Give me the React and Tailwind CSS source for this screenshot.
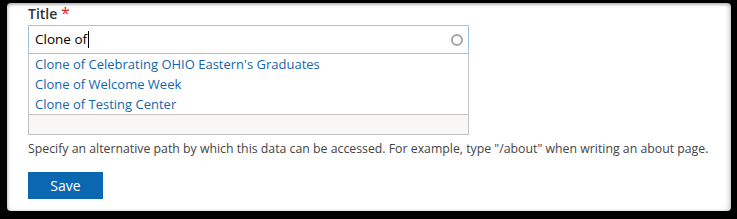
import React from "react";

export default function App() {
  const items = [
    "Clone of Celebrating OHIO Eastern's Graduates",
    "Clone of Welcome Week",
    "Clone of Testing Center",
  ];
  return (
    <div className="w-[737px] h-[219px] bg-black pt-[5px] pl-[7px] pr-[6px] pb-[6px] font-['Open_Sans',sans-serif]">
      <div className="h-full w-full bg-white rounded-[4px] shadow-[inset_0_2px_3px_rgba(0,0,0,0.22),inset_-3px_0_4px_rgba(0,0,0,0.12),inset_2px_0_3px_rgba(0,0,0,0.1)] pl-[21px] pt-0">
        <div className="w-[441px]">
          <div className="mt-[-2px] h-[20px] leading-[20px] text-[14px] font-semibold text-[#333]">
            Title <span className="text-[#e41c1c] font-normal text-[16px]">*</span>
          </div>
          <div className="relative mt-[2px]">
            <div className="h-[29px] border border-[#9fc5e6] flex items-center pl-[6px] pr-[5px] text-[13.5px] text-black">
              <span>Clone of</span>
              <span className="w-px h-[17px] bg-black ml-[1px]" />
              <span className="ml-auto w-[12px] h-[12px] rounded-full border-2 border-[#a6a6a6]" />
            </div>
            <div className="absolute left-0 top-full w-full h-[61px] bg-white border-x border-b border-[#c4c4c4] z-10">
              {items.map((t) => (
                <div key={t} className="h-[20px] leading-[20px] pl-[6px] text-[13px] text-[#1466ad]">
                  {t}
                </div>
              ))}
            </div>
          </div>
          <div className="h-[52px]" />
          <div className="h-[29px] border border-[#c2c2c2] bg-[#f8f7f5]" />
        </div>
        <p className="mt-[5px] h-[18px] leading-[18px] text-[12.3px] text-[#444]">
          Specify an alternative path by which this data can be accessed. For example, type "/about" when writing an about page.
        </p>
        <button className="mt-[14px] w-[75px] h-[27px] bg-[#0b67b0] text-white text-[14px] font-medium leading-[27px] text-center">
          Save
        </button>
      </div>
    </div>
  );
}
